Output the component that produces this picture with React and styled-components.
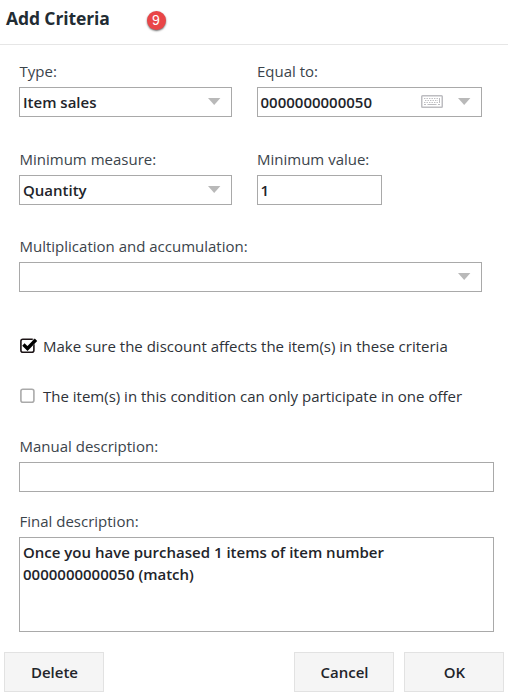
import React from "react";
import styled, { createGlobalStyle } from "styled-components";

const Global = createGlobalStyle`
  * { box-sizing: border-box; }
  body { margin: 0; background: #fff; font-family: "Open Sans", sans-serif; color: #2e3238; font-size: 15px; }
`;
const Dialog = styled.div`
  width: 508px;
  height: 698px;
  display: flex;
  flex-direction: column;
  overflow: hidden;
`;
const Header = styled.header`
  height: 45px;
  border-bottom: 1px solid #e6e6e6;
  display: flex;
  align-items: flex-start;
  padding: 6px 6px 0;
`;
const Title = styled.h1`
  margin: 0;
  width: 140px;
  font-size: 17.5px;
  line-height: 25px;
  font-weight: 700;
  letter-spacing: -0.1px;
  color: #222c33;
`;
const Badge = styled.span`
  width: 19px;
  height: 19px;
  margin: 4.5px 0 0 0.5px;
  border-radius: 50%;
  background: #e94547;
  color: #fff;
  font: 14px/19px "Liberation Sans", sans-serif;
  text-align: center;
  box-shadow: 0 1px 2px rgba(0, 0, 0, 0.6);
`;
const Form = styled.main`
  flex: 1;
  padding: 15px 14px 0 19px;
  display: flex;
  flex-direction: column;
`;
const Row = styled.div`
  display: flex;
  gap: 25px;
  height: ${p => p.$h}px;
`;
const Field = styled.label`
  display: flex;
  flex-direction: column;
  width: ${p => p.$w}px;
`;
const Caption = styled.span`
  height: 27px;
  line-height: 22px;
  padding-left: 0.5px;
  white-space: nowrap;
  color: #3b444b;
  ${Field} + ${Field} & { padding-left: 0; }
`;
const Box = styled.span`
  height: 30px;
  border: 1px solid #a9a9a9;
  display: flex;
  align-items: center;
  padding: 0 10px 0 3px;
  font-weight: 600;
  color: #22242a;
  ${Field} + ${Field} & { padding-left: 2.5px; }
`;
const Value = styled.span`
  flex: 1;
  line-height: 22px;
`;
const TextArea = styled.span`
  height: 95px;
  border: 1px solid #a9a9a9;
  padding: 3px 80px 0 3px;
  font-weight: 600;
  line-height: 22px;
  color: #22242a;
`;
const Check = styled.label`
  display: flex;
  height: 50px;
  gap: 5px;
  line-height: 22px;
  white-space: nowrap;
`;
const Footer = styled.footer`
  height: 46px;
  padding: 0 4px;
  display: flex;
  gap: 10px;
`;
const Button = styled.button`
  width: 100px;
  height: 40px;
  border: 1px solid #e2e2e2;
  background: #f5f5f5;
  font: 600 15px "Open Sans", sans-serif;
  color: #22242a;
  padding: 0 0 0 1px;
  margin-right: ${p => (p.$push ? "auto" : 0)};
`;
const ArrowIcon = styled.svg`
  margin-bottom: 2px;
`;
const KeyboardIcon = styled.svg`
  margin: 0 15px 1px 0;
`;
const Arrow = () => (
  <ArrowIcon width="13" height="7"><path d="M0 0H12.4L6.2 7Z" fill="#b9b9b9" /></ArrowIcon>
);
const Keyboard = () => (
  <KeyboardIcon width="22" height="13" fill="none" stroke="#bdbdc1">
    <rect x="0.75" y="0.75" width="20.5" height="11.5" rx="0.8" strokeWidth="1.5" />
    <path d="M3 3.5H19M4 5.5H17M3 7.5H19" strokeDasharray="1.4 1.1" />
    <path d="M18.5 3V8M3 9.5H5M6.5 9.5H15.5M17 9.5H19" />
  </KeyboardIcon>
);
const CheckBox = ({ checked }) => (
  <svg width="19" height="22" fill="none">
    <rect x="1.9" y="4.2" width="13" height="13" rx="2" stroke={checked ? "#1c1416" : "#aaa"} strokeWidth="1.6" />
    {checked && <>
      <path d="M13.5 4.5L17 4V8L14 10.5Z" fill="#fff" />
      <path d="M4.4 9.6L8.5 13.5L17 4.8" stroke="#000" strokeWidth="3.4" />
    </>}
  </svg>
);

export default function App() {
  return (
    <>
      <Global />
      <Dialog>
        <Header><Title>Add Criteria</Title><Badge>9</Badge></Header>
        <Form>
          <Row $h={88}>
            <Field $w={213}><Caption>Type:</Caption><Box><Value>Item sales</Value><Arrow /></Box></Field>
            <Field $w={225}><Caption>Equal to:</Caption><Box><Value>0000000000050</Value><Keyboard /><Arrow /></Box></Field>
          </Row>
          <Row $h={87}>
            <Field $w={213}><Caption>Minimum measure:</Caption><Box><Value>Quantity</Value><Arrow /></Box></Field>
            <Field $w={125}><Caption>Minimum value:</Caption><Box><Value>1</Value></Box></Field>
          </Row>
          <Row $h={100}>
            <Field $w={463}><Caption>Multiplication and accumulation:</Caption><Box><Value /><Arrow /></Box></Field>
          </Row>
          <Check><CheckBox checked />Make sure the discount affects the item(s) in these criteria</Check>
          <Check><CheckBox />The item(s) in this condition can only participate in one offer</Check>
          <Row $h={75}>
            <Field $w={475}><Caption>Manual description:</Caption><Box /></Field>
          </Row>
          <Row $h={122}>
            <Field $w={475}><Caption>Final description:</Caption><TextArea>Once you have purchased 1 items of item number 0000000000050 (match)</TextArea></Field>
          </Row>
        </Form>
        <Footer><Button $push>Delete</Button><Button>Cancel</Button><Button>OK</Button></Footer>
      </Dialog>
    </>
  );
}
